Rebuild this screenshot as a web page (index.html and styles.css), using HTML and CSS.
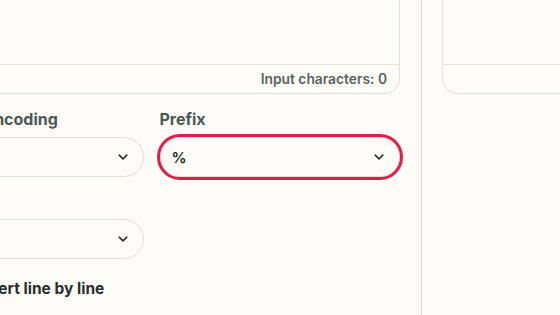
FILE: index.html
```html
<!DOCTYPE html>
<html lang="en">
<head>
<meta charset="utf-8">
<title>URL Encode</title>
<link rel="stylesheet" href="styles.css">
</head>
<body>
<div class="page">
  <section class="panel panel-left">
    <div class="card">
      <div class="card-body"></div>
      <div class="card-footer">Input characters: 0</div>
    </div>
    <div class="fields">
      <div class="field">
        <div class="label">Character encoding</div>
        <div class="select">
          <span class="select-value">UTF-8</span>
          <svg class="chev" width="10" height="6" viewBox="0 0 10 6"><path d="M1.2 1.2l3.8 3.6 3.8-3.6" fill="none" stroke="#2a2e2d" stroke-width="1.6" stroke-linecap="round" stroke-linejoin="round"/></svg>
        </div>
      </div>
      <div class="field">
        <div class="label">Prefix</div>
        <div class="select focused">
          <span class="select-value">%</span>
          <svg class="chev" width="10" height="6" viewBox="0 0 10 6"><path d="M1.2 1.2l3.8 3.6 3.8-3.6" fill="none" stroke="#2a2e2d" stroke-width="1.6" stroke-linecap="round" stroke-linejoin="round"/></svg>
        </div>
      </div>
      <div class="field">
        <div class="label">Newline</div>
        <div class="select">
          <span class="select-value">LF</span>
          <svg class="chev" width="10" height="6" viewBox="0 0 10 6"><path d="M1.2 1.2l3.8 3.6 3.8-3.6" fill="none" stroke="#2a2e2d" stroke-width="1.6" stroke-linecap="round" stroke-linejoin="round"/></svg>
        </div>
      </div>
    </div>
    <label class="check-row"><span class="toggle"><span class="knob"></span></span><span class="check-text">Convert line by line</span></label>
  </section>
  <section class="panel panel-right">
    <div class="card">
      <div class="card-body"></div>
      <div class="card-footer"></div>
    </div>
  </section>
</div>
</body>
</html>
```

FILE: styles.css
```css
html, body {
  margin: 0;
  padding: 0;
}
body {
  width: 560px;
  height: 315px;
  overflow: hidden;
  background: #fdfcf8;
  font-family: Inter, "Liberation Sans", sans-serif;
  color: #232726;
}
.page {
  display: flex;
  margin: -100px 0 0 -97px;
  min-height: 460px;
}
.panel-left {
  width: 497px;
  flex: none;
  padding-right: 21px;
  border-right: 1px solid #dedbd1;
}
.panel-right {
  width: 400px;
  flex: none;
  padding-left: 20px;
}
.card {
  border: 1px solid #e3e0d6;
  border-radius: 15px;
  background: #fdfcf8;
}
.card-body {
  height: 163px;
  border-bottom: 1px solid #e6e3da;
}
.card-footer {
  height: 28px;
  line-height: 28px;
  padding-right: 12px;
  text-align: right;
  font-size: 13.8px;
  font-weight: 600;
  color: #59625f;
}
.fields {
  display: grid;
  grid-template-columns: 1fr 1fr;
  column-gap: 16px;
  row-gap: 14px;
  margin-top: 15px;
}
.label {
  font-size: 16px;
  line-height: 20px;
  font-weight: 700;
  color: #4b5753;
  margin-bottom: 8px;
  white-space: nowrap;
}
.select {
  box-sizing: border-box;
  height: 40px;
  border: 1px solid #e2dfd5;
  border-radius: 20px;
  background: #fdfcf8;
  display: flex;
  align-items: center;
  justify-content: space-between;
  padding: 0 15px 0 11px;
}
.select.focused {
  outline: 3px solid #e11d48;
  outline-offset: 0;
}
.select-value {
  font-size: 15px;
  font-weight: 600;
  color: #1f2322;
}
.chev {
  display: block;
}
.check-row {
  display: flex;
  align-items: center;
  gap: 12px;
  margin-top: 18px;
}
.toggle {
  position: relative;
  width: 44px;
  height: 24px;
  border-radius: 12px;
  background: #d9d5ca;
  flex: none;
}
.knob {
  position: absolute;
  top: 3px;
  left: 3px;
  width: 18px;
  height: 18px;
  border-radius: 50%;
  background: #fff;
}
.check-text {
  font-size: 15.5px;
  line-height: 20px;
  font-weight: 700;
  color: #2a2e2d;
}
```
